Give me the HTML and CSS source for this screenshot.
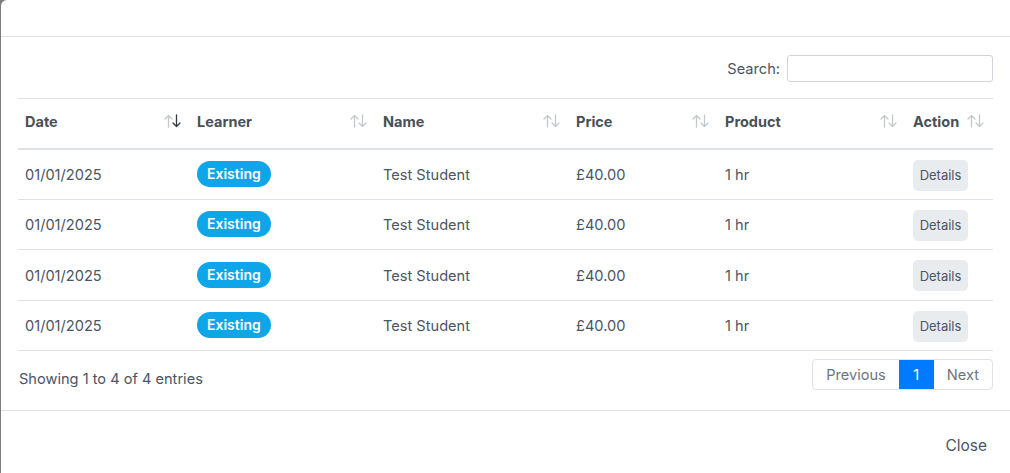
FILE: index.html
```html
<!DOCTYPE html>
<html>
<head>
<meta charset="utf-8">
<link rel="stylesheet" href="styles.css">
</head>
<body>
<div class="modal">
  <div class="modal-header"></div>
  <div class="modal-body">
    <div class="search-row">
      <label class="search-label">Search:</label>
      <input class="search-input" type="text">
    </div>
    <table class="dt">
      <colgroup>
        <col class="c-date"><col class="c-learner"><col class="c-name"><col class="c-price"><col class="c-product"><col class="c-action">
      </colgroup>
      <thead>
        <tr>
          <th><span>Date</span><svg class="sort" viewBox="0 0 18 14"><path class="lt" d="M4.5 13V1.5M1 5l3.5-3.5L8 5"/><path class="dk" d="M12.5 1v11.5M9 9l3.5 3.5L16 9"/></svg></th>
          <th><span>Learner</span><svg class="sort" viewBox="0 0 18 14"><path class="lt" d="M4.5 13V1.5M1 5l3.5-3.5L8 5"/><path class="lt" d="M12.5 1v11.5M9 9l3.5 3.5L16 9"/></svg></th>
          <th><span>Name</span><svg class="sort" viewBox="0 0 18 14"><path class="lt" d="M4.5 13V1.5M1 5l3.5-3.5L8 5"/><path class="lt" d="M12.5 1v11.5M9 9l3.5 3.5L16 9"/></svg></th>
          <th><span>Price</span><svg class="sort" viewBox="0 0 18 14"><path class="lt" d="M4.5 13V1.5M1 5l3.5-3.5L8 5"/><path class="lt" d="M12.5 1v11.5M9 9l3.5 3.5L16 9"/></svg></th>
          <th><span>Product</span><svg class="sort" viewBox="0 0 18 14"><path class="lt" d="M4.5 13V1.5M1 5l3.5-3.5L8 5"/><path class="lt" d="M12.5 1v11.5M9 9l3.5 3.5L16 9"/></svg></th>
          <th><span>Action</span><svg class="sort" viewBox="0 0 18 14"><path class="lt" d="M4.5 13V1.5M1 5l3.5-3.5L8 5"/><path class="lt" d="M12.5 1v11.5M9 9l3.5 3.5L16 9"/></svg></th>
        </tr>
      </thead>
      <tbody>
        <tr><td>01/01/2025</td><td><span class="badge">Existing</span></td><td>Test Student</td><td>£40.00</td><td>1 hr</td><td><button class="btn-details">Details</button></td></tr>
        <tr><td>01/01/2025</td><td><span class="badge">Existing</span></td><td>Test Student</td><td>£40.00</td><td>1 hr</td><td><button class="btn-details">Details</button></td></tr>
        <tr><td>01/01/2025</td><td><span class="badge">Existing</span></td><td>Test Student</td><td>£40.00</td><td>1 hr</td><td><button class="btn-details">Details</button></td></tr>
        <tr><td>01/01/2025</td><td><span class="badge">Existing</span></td><td>Test Student</td><td>£40.00</td><td>1 hr</td><td><button class="btn-details">Details</button></td></tr>
      </tbody>
    </table>
    <div class="table-footer">
      <div class="info">Showing 1 to 4 of 4 entries</div>
      <div class="pagination">
        <span class="page">Previous</span>
        <span class="page active">1</span>
        <span class="page">Next</span>
      </div>
    </div>
  </div>
  <div class="modal-footer">
    <button class="btn-close">Close</button>
  </div>
</div>
</body>
</html>
```
FILE: styles.css
```css
* { box-sizing: border-box; }
html, body { margin: 0; padding: 0; }
body {
  background: #7d7d7d;
  font-family: Inter, "Noto Sans", sans-serif;
  width: 1010px;
  height: 473px;
  overflow: hidden;
}
.modal {
  margin-left: 1px;
  height: 473px;
  background: #fff;
  border-top-left-radius: 6px;
  display: flex;
  flex-direction: column;
}
.modal-header {
  height: 37px;
  border-bottom: 1px solid #dee2e6;
}
.modal-body {
  padding: 18px 17px 0 17px;
}
.search-row {
  display: flex;
  justify-content: flex-end;
  align-items: center;
  gap: 7px;
  height: 27px;
}
.search-label {
  font-size: 14.6px;
  color: #4b5563;
}
.search-input {
  width: 206px;
  height: 27px;
  border: 1px solid #ced4da;
  border-radius: 3px;
  padding: 0 6px;
  outline: none;
}
.dt {
  margin-top: 16px;
  width: 975px;
  border-collapse: collapse;
  table-layout: fixed;
}
.c-date { width: 172px; }
.c-learner { width: 186px; }
.c-name { width: 193px; }
.c-price { width: 149px; }
.c-product { width: 188px; }
.c-action { width: 87px; }
.dt thead tr {
  height: 50px;
  border-top: 1px solid #dee2e6;
  border-bottom: 2px solid #dee2e6;
}
.dt th {
  position: relative;
  text-align: left;
  font-size: 14.5px;
  font-weight: 700;
  color: #495057;
  padding: 0 8px 3px 7px;
}
.sort {
  position: absolute;
  right: 8px;
  top: 15px;
  width: 18px;
  height: 14px;
  fill: none;
  stroke-width: 1.3;
  stroke-linecap: round;
  stroke-linejoin: round;
}
.sort .lt { stroke: #c4c8cc; }
.sort .dk { stroke: #343a40; }
.dt tbody tr {
  height: 50.5px;
  border-bottom: 1px solid #dee2e6;
}
.dt td {
  font-size: 14.6px;
  color: #4b5563;
  padding: 2px 7px 0 7px;
  vertical-align: middle;
}
.badge {
  display: inline-block;
  background: #0ea5e9;
  color: #fff;
  font-weight: 600;
  font-size: 14px;
  line-height: 26px;
  height: 26px;
  padding: 0 10px;
  border-radius: 13px;
  margin-top: -2px;
}
.btn-details {
  font-family: inherit;
  font-size: 13px;
  color: #4b5563;
  background: #e9ecef;
  border: none;
  border-radius: 5px;
  width: 55px;
  height: 31px;
  padding: 0;
}
.table-footer {
  display: flex;
  justify-content: space-between;
  align-items: flex-start;
  margin-top: 8px;
  padding-left: 1px;
}
.info {
  font-size: 14.6px;
  color: #4b5563;
  padding-top: 11px;
}
.pagination {
  display: flex;
  height: 31px;
  border: 1px solid #dee2e6;
  border-radius: 4px;
  overflow: hidden;
}
.page {
  display: flex;
  align-items: center;
  justify-content: center;
  font-size: 14.6px;
  color: #6c757d;
  padding: 0 13px;
}
.page.active {
  background: #007bff;
  color: #fff;
  width: 35px;
  padding: 0;
}
.modal-footer {
  margin-top: 20px;
  border-top: 1px solid #dee2e6;
  flex: 1;
  display: flex;
  justify-content: flex-end;
  align-items: center;
  padding: 6px 23px 0 0;
}
.btn-close {
  font-family: inherit;
  font-size: 15.5px;
  color: #4b5563;
  background: none;
  border: none;
  padding: 0;
}
```
